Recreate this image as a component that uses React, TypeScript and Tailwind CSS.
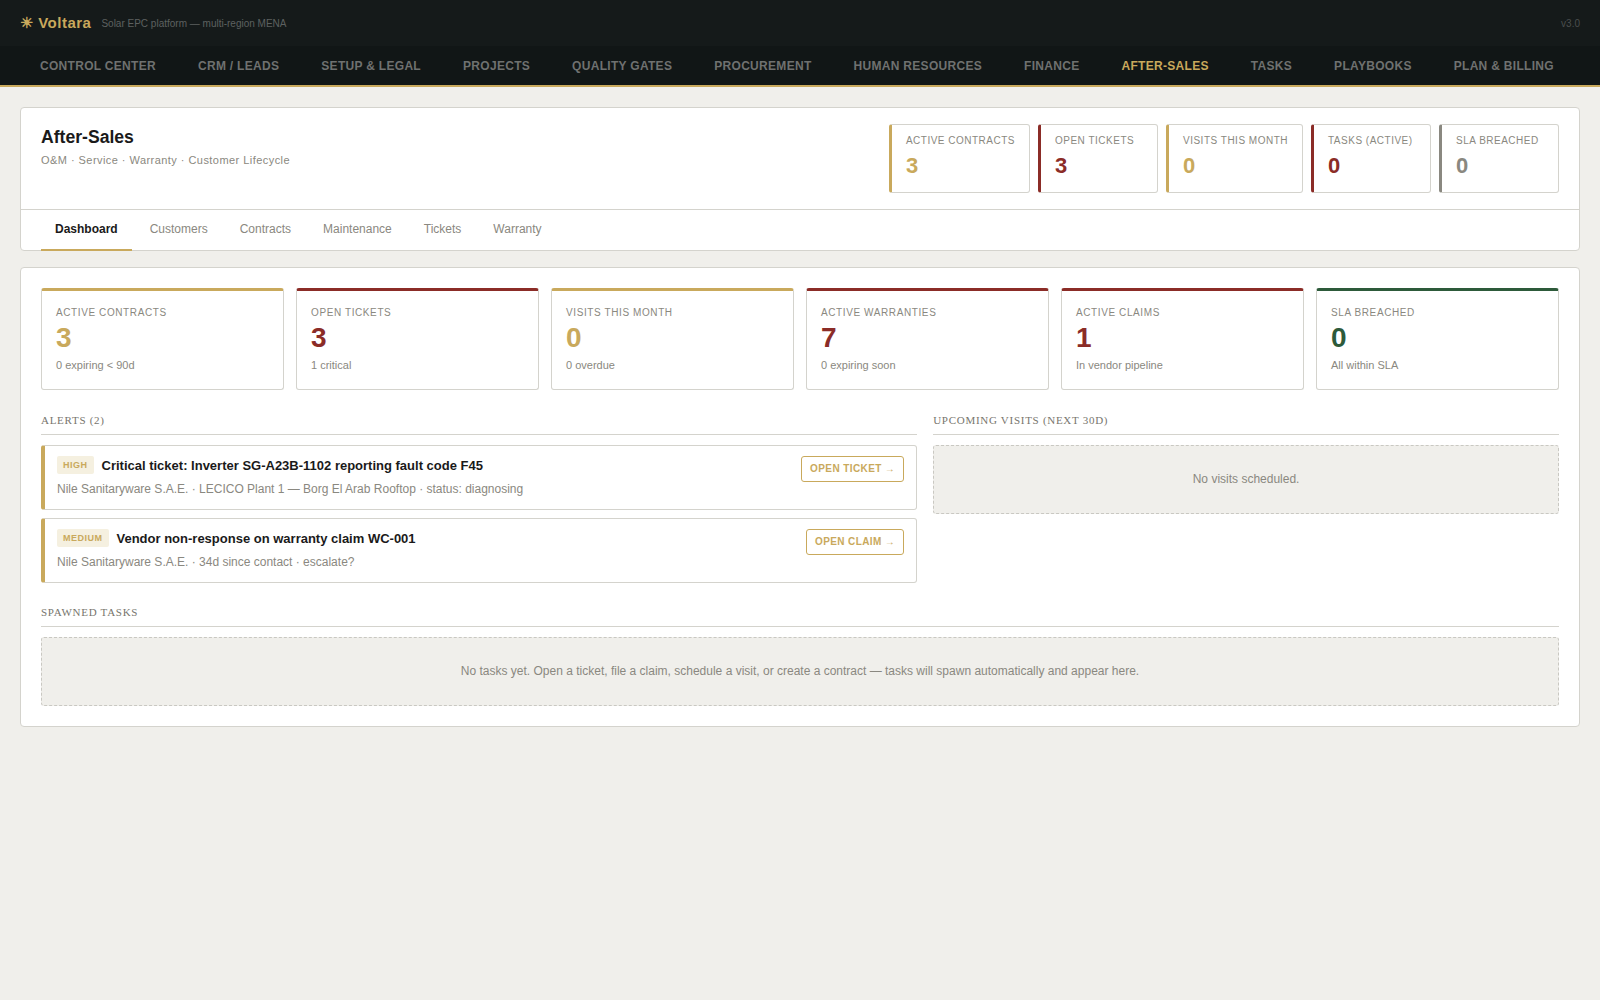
const navItems = [
  'Control Center',
  'CRM / Leads',
  'Setup & Legal',
  'Projects',
  'Quality Gates',
  'Procurement',
  'Human Resources',
  'Finance',
  'After-Sales',
  'Tasks',
  'Playbooks',
  'Plan & Billing',
];

const tabs = ['Dashboard', 'Customers', 'Contracts', 'Maintenance', 'Tickets', 'Warranty'];

const headerStats = [
  { label: 'Active Contracts', value: '3', border: 'border-l-[#c9a95c]', text: 'text-[#c9a95c]' },
  { label: 'Open Tickets', value: '3', border: 'border-l-[#8b2c27]', text: 'text-[#8b2c27]' },
  { label: 'Visits This Month', value: '0', border: 'border-l-[#c9a95c]', text: 'text-[#c9a95c]' },
  { label: 'Tasks (Active)', value: '0', border: 'border-l-[#8b2c27]', text: 'text-[#8b2c27]' },
  { label: 'SLA Breached', value: '0', border: 'border-l-[#8a8880]', text: 'text-[#8a8880]' },
];

const kpis = [
  { label: 'Active Contracts', value: '3', sub: '0 expiring < 90d', border: 'border-t-[#c9a95c]', text: 'text-[#c9a95c]' },
  { label: 'Open Tickets', value: '3', sub: '1 critical', border: 'border-t-[#8b2c27]', text: 'text-[#8b2c27]' },
  { label: 'Visits This Month', value: '0', sub: '0 overdue', border: 'border-t-[#c9a95c]', text: 'text-[#c9a95c]' },
  { label: 'Active Warranties', value: '7', sub: '0 expiring soon', border: 'border-t-[#8b2c27]', text: 'text-[#8b2c27]' },
  { label: 'Active Claims', value: '1', sub: 'In vendor pipeline', border: 'border-t-[#8b2c27]', text: 'text-[#8b2c27]' },
  { label: 'SLA Breached', value: '0', sub: 'All within SLA', border: 'border-t-[#2d5a3a]', text: 'text-[#2d5a3a]' },
];

const alerts = [
  {
    level: 'High',
    title: 'Critical ticket: Inverter SG-A23B-1102 reporting fault code F45',
    sub: 'Nile Sanitaryware S.A.E. · LECICO Plant 1 — Borg El Arab Rooftop · status: diagnosing',
    action: 'Open Ticket',
  },
  {
    level: 'Medium',
    title: 'Vendor non-response on warranty claim WC-001',
    sub: 'Nile Sanitaryware S.A.E. · 34d since contact · escalate?',
    action: 'Open Claim',
  },
];

const SectionTitle = ({ children }: { children: string }) => (
  <h3 className="font-['Liberation_Serif',serif] text-[11px] leading-[14px] uppercase tracking-[0.72px] text-[#77756d] pb-[7px] border-b border-[#d4d3cd] mb-[10px] -mt-[1px]">
    {children}
  </h3>
);

const EmptyBox = ({ children }: { children: string }) => (
  <div className="py-6 bg-[#f0efeb] border border-dashed border-[#c9c8c2] rounded-[3px] text-center text-xs leading-[19px] text-[#8a8880]">
    {children}
  </div>
);

export default function App() {
  return (
    <div className="min-h-[1000px] bg-[#f0efeb] font-['Liberation_Sans',sans-serif]">
      {/* Top bar */}
      <header className="h-[46px] bg-[#151a1a] flex items-center justify-between px-5">
        <div className="flex items-center gap-[10px]">
          <span className="pt-[1px] text-[15px] font-bold tracking-[0.5px] text-[#c9a95c]">☀ Voltara</span>
          <span className="text-[10px] text-[#5d6160]">Solar EPC platform — multi-region MENA</span>
        </div>
        <span className="text-[10px] text-[#4a4e4d]">v3.0</span>
      </header>

      <nav className="h-[41px] bg-[#111616] border-b-2 border-[#c9a95c] flex items-center px-5">
        {navItems.map((item) => (
          <a
            key={item}
            className={`px-5 mr-[2px] text-xs font-bold uppercase tracking-[0.3px] whitespace-nowrap ${
              item === 'After-Sales' ? 'text-[#c9a95c]' : 'text-[#6f7170]'
            }`}
          >
            {item}
          </a>
        ))}
      </nav>

      <main className="p-5 flex flex-col gap-4">
        {/* Page header */}
        <section className="bg-white border border-[#d4d3cd] rounded-[4px]">
          <div className="h-[102px] px-5 pt-4 flex justify-between border-b border-[#d4d3cd]">
            <div>
              <h1 className="text-[17.6px] leading-[24px] font-bold text-[#1a1a1a] mt-[1px]">After-Sales</h1>
              <p className="mt-[4px] text-[11px] leading-[14px] tracking-[0.45px] text-[#8a8880]">
                O&amp;M · Service · Warranty · Customer Lifecycle
              </p>
            </div>
            <div className="flex gap-2 h-[69px]">
              {headerStats.map((s) => (
                <div key={s.label} className={`min-w-[120px] bg-white border border-[#d4d3cd] border-l-[3px] ${s.border} rounded-[3px] px-[14px] pt-[9px]`}>
                  <div className="text-[10px] leading-[14px] uppercase tracking-[0.5px] text-[#8a8880] whitespace-nowrap">{s.label}</div>
                  <div className={`mt-[4px] text-[22px] leading-[28px] font-bold ${s.text}`}>{s.value}</div>
                </div>
              ))}
            </div>
          </div>
          <div className="h-[40px] px-5 flex gap-1">
            {tabs.map((t) => (
              <a
                key={t}
                className={`h-[41px] px-[14px] pb-[2px] flex items-center text-xs border-b-2 ${
                  t === 'Dashboard' ? 'font-bold text-[#1a1a1a] border-[#c9a95c]' : 'text-[#8a8880] border-transparent'
                }`}
              >
                {t}
              </a>
            ))}
          </div>
        </section>

        {/* Dashboard */}
        <section className="bg-white border border-[#d4d3cd] rounded-[4px] p-5">
          <div className="grid grid-cols-6 gap-3 mb-6">
            {kpis.map((k) => (
              <div key={k.label} className={`h-[102px] border border-[#d4d3cd] border-t-[3px] ${k.border} rounded-[3px] px-[14px] pt-[15px]`}>
                <div className="text-[10px] leading-[14px] uppercase tracking-[0.6px] text-[#8a8880]">{k.label}</div>
                <div className={`mt-[2px] text-[28px] leading-[32px] font-bold ${k.text}`}>{k.value}</div>
                <div className="mt-[4px] text-[11px] leading-[14px] text-[#8a8880]">{k.sub}</div>
              </div>
            ))}
          </div>

          <div className="grid grid-cols-[1.4fr_1fr] gap-4 mb-[23px]">
            <div>
              <SectionTitle>Alerts (2)</SectionTitle>
              <div className="flex flex-col gap-2">
                {alerts.map((a) => (
                  <div key={a.title} className="h-[65px] flex justify-between border border-[#d4d3cd] border-l-4 border-l-[#c9a95c] rounded-[3px] px-3 pt-[10px]">
                    <div>
                      <div className="flex items-start gap-2">
                        <span className="px-[6px] py-[2px] bg-[#f5f0e0] rounded-[2px] text-[9px] leading-[14px] font-bold uppercase tracking-[0.5px] text-[#c9a95c]">
                          {a.level}
                        </span>
                        <span className="mt-[1px] text-[13px] leading-[18px] font-bold text-[#1a1a1a]">{a.title}</span>
                      </div>
                      <div className="mt-[6px] text-xs leading-[16px] text-[#8a8880]">{a.sub}</div>
                    </div>
                    <button className="self-start h-[25.5px] px-2 border border-[#c9a95c] rounded-[3px] text-[10px] font-bold uppercase tracking-[0.4px] text-[#c9a95c] whitespace-nowrap">
                      {a.action}
                      <span className="ml-[3px] font-normal">→</span>
                    </button>
                  </div>
                ))}
              </div>
            </div>
            <div>
              <SectionTitle>Upcoming Visits (Next 30d)</SectionTitle>
              <EmptyBox>No visits scheduled.</EmptyBox>
            </div>
          </div>

          <SectionTitle>Spawned Tasks</SectionTitle>
          <EmptyBox>No tasks yet. Open a ticket, file a claim, schedule a visit, or create a contract — tasks will spawn automatically and appear here.</EmptyBox>
        </section>
      </main>
    </div>
  );
}
